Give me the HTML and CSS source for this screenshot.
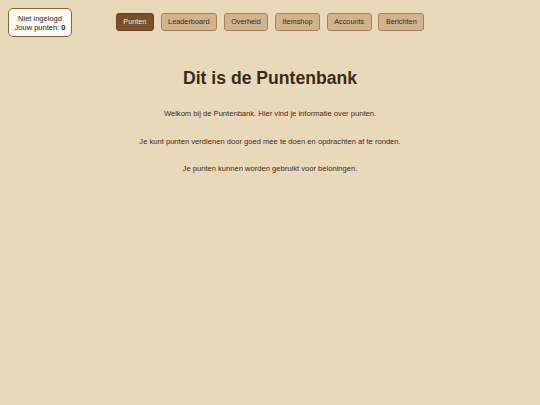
FILE: index.html
```html
<!DOCTYPE html>
<html lang="nl">
<head>
<meta charset="utf-8">
<title>Puntenbank</title>
<link rel="stylesheet" href="styles.css">
</head>
<body>
<div class="status">
  <div>Niet ingelogd</div>
  <div>Jouw punten: <b>0</b></div>
</div>
<nav class="nav">
  <a class="btn active">Punten</a>
  <a class="btn">Leaderboard</a>
  <a class="btn">Overheid</a>
  <a class="btn">Itemshop</a>
  <a class="btn">Accounts</a>
  <a class="btn">Berichten</a>
</nav>
<main class="content">
  <h1>Dit is de Puntenbank</h1>
  <p>Welkom bij de Puntenbank. Hier vind je informatie over punten.</p>
  <p>Je kunt punten verdienen door goed mee te doen en opdrachten af te ronden.</p>
  <p>Je punten kunnen worden gebruikt voor beloningen.</p>
</main>
</body>
</html>
```
FILE: styles.css
```css
html, body {
  margin: 0;
  padding: 0;
}
body {
  background: #e9d9bb;
  font-family: "Liberation Sans", Arial, sans-serif;
  color: #3b2a1c;
  min-height: 405px;
}
.status {
  position: absolute;
  left: 8px;
  top: 8px;
  width: 62px;
  height: 27px;
  box-sizing: content-box;
  background: #fffaf2;
  border: 1px solid #8a5e36;
  border-radius: 5px;
  font-size: 7.5px;
  line-height: 9px;
  text-align: center;
  display: flex;
  flex-direction: column;
  justify-content: center;
  color: #2a2018;
}
.nav {
  display: flex;
  justify-content: center;
  gap: 6.5px;
  padding-top: 13px;
}
.btn {
  display: block;
  height: 16px;
  line-height: 16px;
  padding: 0 6.6px;
  font-size: 7.3px;
  background: #d1b48d;
  border: 1px solid #a9825a;
  border-radius: 3px;
  color: #3b2a1c;
}
.btn.active {
  background: #7b4f28;
  border-color: #6a421f;
  color: #f4e8d6;
}
.content {
  text-align: center;
}
h1 {
  font-size: 17.6px;
  font-weight: bold;
  margin: 37px 0 0;
  line-height: 20px;
}
p {
  font-size: 7.6px;
  margin: 0;
  line-height: 10px;
}
h1 + p { margin-top: 21px; }
p + p { margin-top: 17.5px; }
```
